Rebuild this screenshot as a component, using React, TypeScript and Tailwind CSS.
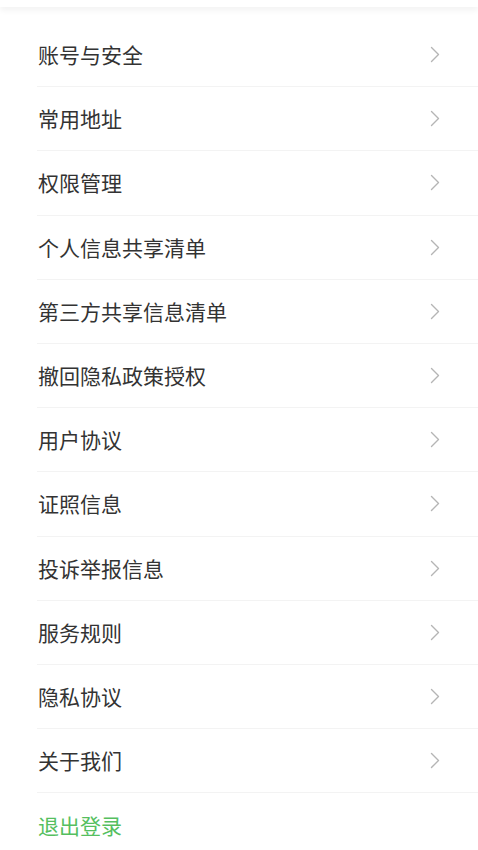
import React from "react";

const items = [
  "账号与安全",
  "常用地址",
  "权限管理",
  "个人信息共享清单",
  "第三方共享信息清单",
  "撤回隐私政策授权",
  "用户协议",
  "证照信息",
  "投诉举报信息",
  "服务规则",
  "隐私协议",
  "关于我们",
];

function Chevron() {
  return (
    <svg width="10" height="17" viewBox="0 0 10 17" fill="none" className="shrink-0">
      <polyline points="1.5,1.5 8.5,8.5 1.5,15.5" stroke="#b5b5b5" strokeWidth="1.4" strokeLinecap="round" strokeLinejoin="round" />
    </svg>
  );
}

export default function App() {
  return (
    <div
      className="w-[478px] h-[850px] bg-white overflow-hidden"
      style={{ fontFamily: '"Noto Sans CJK SC", "Noto Sans", sans-serif' }}
    >
      <div className="h-[7px] bg-white shadow-[0_3px_6px_rgba(0,0,0,0.06)]" />
      <div className="pl-[37px] pt-[16px]">
        {items.map((t) => (
          <div
            key={t}
            className="h-[64.2px] flex items-center justify-between pr-[38px] border-b border-[#f3f3f3]"
          >
            <span className="text-[21px] text-[#333333] leading-none pl-[1px]">{t}</span>
            <Chevron />
          </div>
        ))}
        <div className="h-[64px] flex items-center">
          <span className="text-[21px] text-[#55bf5f] leading-none pl-[1px]">退出登录</span>
        </div>
      </div>
    </div>
  );
}
